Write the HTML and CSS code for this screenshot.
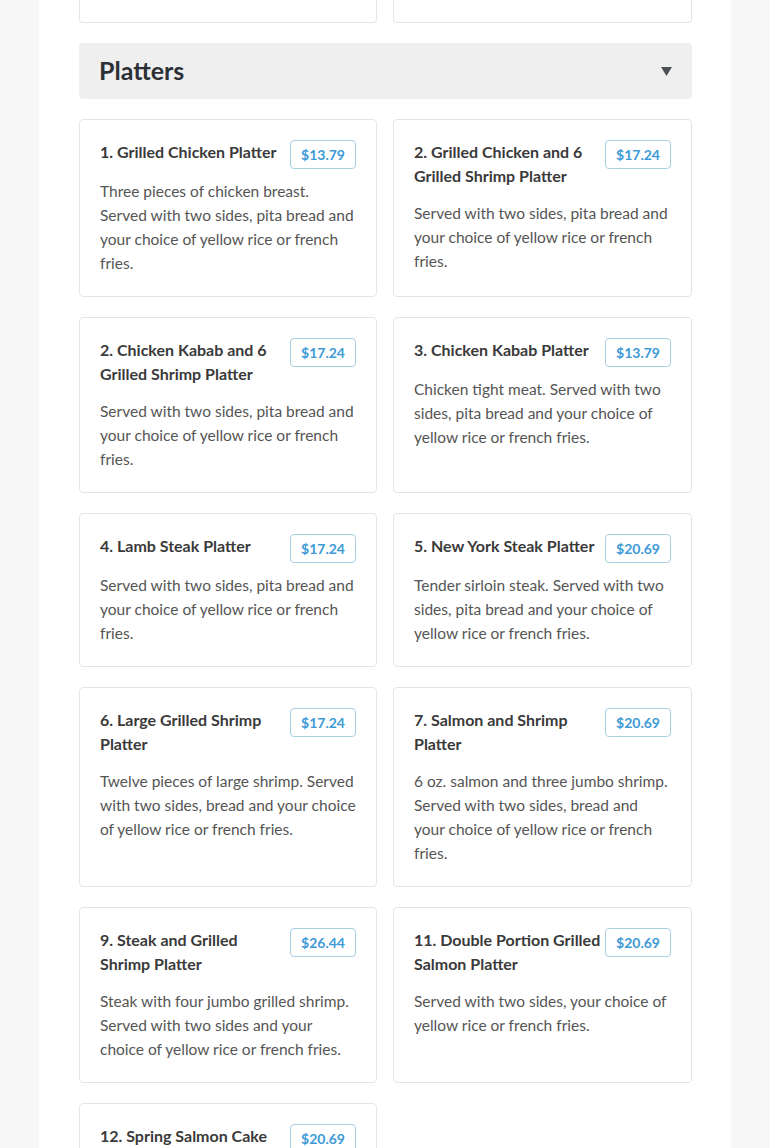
FILE: index.html
```html
<!DOCTYPE html>
<html lang="en">
<head>
<meta charset="utf-8">
<title>Menu - Platters</title>
<link rel="stylesheet" href="styles.css">
</head>
<body>
<div class="page">
  <div class="grid prev">
    <div class="card card-cut"></div>
    <div class="card card-cut"></div>
  </div>

  <div class="section-head">
    <h2 class="section-title">Platters</h2>
    <svg class="caret" width="11" height="9" viewBox="0 0 11 9" aria-hidden="true"><polygon points="0,0 11,0 5.5,9" fill="#4b5058"/></svg>
  </div>

  <div class="grid">
    <div class="card">
      <div class="card-head"><h3 class="item-name">1. Grilled Chicken Platter</h3><span class="price">$13.79</span></div>
      <p class="item-desc">Three pieces of chicken breast. Served with two sides, pita bread and your choice of yellow rice or french fries.</p>
    </div>
    <div class="card">
      <div class="card-head"><h3 class="item-name">2. Grilled Chicken and 6 Grilled Shrimp Platter</h3><span class="price">$17.24</span></div>
      <p class="item-desc">Served with two sides, pita bread and your choice of yellow rice or french fries.</p>
    </div>
    <div class="card">
      <div class="card-head"><h3 class="item-name">2. Chicken Kabab and 6 Grilled Shrimp Platter</h3><span class="price">$17.24</span></div>
      <p class="item-desc">Served with two sides, pita bread and your choice of yellow rice or french fries.</p>
    </div>
    <div class="card">
      <div class="card-head"><h3 class="item-name">3. Chicken Kabab Platter</h3><span class="price">$13.79</span></div>
      <p class="item-desc">Chicken tight meat. Served with two sides, pita bread and your choice of yellow rice or french fries.</p>
    </div>
    <div class="card">
      <div class="card-head"><h3 class="item-name">4. Lamb Steak Platter</h3><span class="price">$17.24</span></div>
      <p class="item-desc">Served with two sides, pita bread and your choice of yellow rice or french fries.</p>
    </div>
    <div class="card">
      <div class="card-head"><h3 class="item-name">5. New York Steak Platter</h3><span class="price">$20.69</span></div>
      <p class="item-desc">Tender sirloin steak. Served with two sides, pita bread and your choice of yellow rice or french fries.</p>
    </div>
    <div class="card">
      <div class="card-head"><h3 class="item-name">6. Large Grilled Shrimp Platter</h3><span class="price">$17.24</span></div>
      <p class="item-desc">Twelve pieces of large shrimp. Served with two sides, bread and your choice of yellow rice or french fries.</p>
    </div>
    <div class="card">
      <div class="card-head"><h3 class="item-name">7. Salmon and Shrimp Platter</h3><span class="price">$20.69</span></div>
      <p class="item-desc">6 oz. salmon and three jumbo shrimp. Served with two sides, bread and your choice of yellow rice or french fries.</p>
    </div>
    <div class="card">
      <div class="card-head"><h3 class="item-name">9. Steak and Grilled Shrimp Platter</h3><span class="price">$26.44</span></div>
      <p class="item-desc">Steak with four jumbo grilled shrimp. Served with two sides and your choice of yellow rice or french fries.</p>
    </div>
    <div class="card">
      <div class="card-head"><h3 class="item-name">11. Double Portion Grilled Salmon Platter</h3><span class="price">$20.69</span></div>
      <p class="item-desc">Served with two sides, your choice of yellow rice or french fries.</p>
    </div>
    <div class="card">
      <div class="card-head"><h3 class="item-name">12. Spring Salmon Cake</h3><span class="price">$20.69</span></div>
      <p class="item-desc">Served with two sides, pita bread and your choice of yellow rice or french fries.</p>
    </div>
  </div>
</div>
</body>
</html>
```

FILE: styles.css
```css
html, body {
  margin: 0;
  padding: 0;
}

body {
  background: #f7f7f7;
  font-family: Lato, "Open Sans", "Liberation Sans", sans-serif;
  color: #555;
}

.page {
  width: 692px;
  margin: 0 auto;
  background: #fff;
  padding: 0 39px 40px 40px;
  box-sizing: border-box;
  min-height: 1148px;
}

.grid {
  display: grid;
  grid-template-columns: 298px 1fr;
  column-gap: 16px;
  row-gap: 20px;
}

.card {
  background: #fff;
  border: 1px solid #e5e5e5;
  border-radius: 4px;
  padding: 20px 20px 21px;
}

.card-cut {
  height: 22px;
  padding: 0;
  border-top: none;
  border-radius: 0 0 4px 4px;
}

.section-head {
  display: flex;
  align-items: center;
  justify-content: space-between;
  height: 56px;
  margin: 20px 0;
  padding: 0 20px;
  background: #efefef;
  border-radius: 4px;
}

.section-title {
  margin: 0 0 3px;
  font-size: 25px;
  font-weight: 700;
  color: #2c2f35;
  line-height: 30px;
}

.caret {
  display: block;
  margin-top: 1px;
}

.card-head {
  display: flex;
  justify-content: space-between;
  align-items: flex-start;
  gap: 3px;
}

.item-name {
  margin: 0;
  padding-bottom: 13px;
  font-size: 16px;
  font-weight: 700;
  line-height: 24px;
  color: #3a3a3a;
}

.price {
  flex: none;
  margin-bottom: 10px;
  font-size: 14px;
  font-weight: 700;
  line-height: 19px;
  padding: 4px 10px;
  color: #3d9ad6;
  border: 1px solid #a9cfe3;
  border-radius: 4px;
}

.item-desc {
  margin: 0;
  font-size: 15.5px;
  line-height: 24px;
  color: #555;
}
```
